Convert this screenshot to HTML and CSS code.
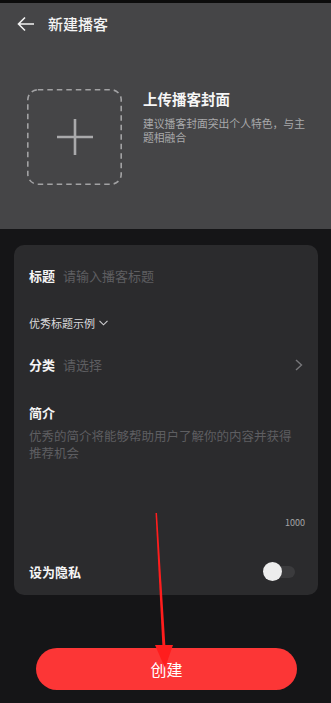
FILE: index.html
```html
<!DOCTYPE html>
<html lang="zh">
<head>
<meta charset="utf-8">
<link rel="stylesheet" href="styles.css">
</head>
<body>
<div class="page">
  <div class="strip"></div>
  <header class="header">
    <div class="nav">
      <svg class="back" width="18" height="16" viewBox="0 0 18 16"><path d="M17 8H2M8 1.5L1.5 8L8 14.5" fill="none" stroke="#f2f2f2" stroke-width="1.6"/></svg>
      <span class="nav-title">新建播客</span>
    </div>
    <div class="cover">
      <div class="upload">
        <svg class="dash" width="95" height="96" viewBox="0 0 95 96"><rect x="0.8" y="0.8" width="93.4" height="94.4" rx="10" fill="none" stroke="#a2a2a4" stroke-width="1.6" stroke-dasharray="5.5 4"/></svg>
        <svg width="36" height="36" viewBox="0 0 36 36"><path d="M18 0V36M0 18H36" stroke="#a9a9ab" stroke-width="2.6"/></svg>
      </div>
      <div class="cover-text">
        <div class="cover-title">上传播客封面</div>
        <div class="cover-sub">建议播客封面突出个人特色，与主题相融合</div>
      </div>
    </div>
  </header>

  <section class="card">
    <div class="row r-title"><span class="label">标题</span><span class="ph">请输入播客标题</span></div>
    <div class="row r-example"><span class="example">优秀标题示例</span>
      <svg width="9" height="6" viewBox="0 0 9 6"><path d="M0.5 0.8L4.5 4.8L8.5 0.8" fill="none" stroke="#cfcfd1" stroke-width="1.1"/></svg></div>
    <div class="row r-cat"><span class="label">分类</span><span class="ph">请选择</span>
      <svg class="chev" width="8" height="12" viewBox="0 0 8 12"><path d="M1 1L6.5 6L1 11" fill="none" stroke="#77777a" stroke-width="1.4"/></svg></div>
    <div class="row r-intro"><span class="label">简介</span></div>
    <div class="desc">优秀的简介将能够帮助用户了解你的内容并获得推荐机会</div>
    <div class="count">1000</div>
    <div class="row r-private"><span class="label">设为隐私</span>
      <span class="toggle"><span class="knob"></span></span></div>
  </section>

  <div class="btn">创建</div>

  <svg class="arrow" width="331" height="703" viewBox="0 0 331 703">
    <polygon points="155.5,513 157,513 165.5,648 162.5,648" fill="#ff1d1d"/>
    <polygon points="155,645 173,645 165,668" fill="#ff1d1d"/>
  </svg>
</div>
</body>
</html>
```

FILE: styles.css
```css
* { box-sizing: border-box; }
html, body { margin: 0; padding: 0; }
body {
  background: #151517;
  font-family: "Noto Sans CJK SC", "Noto Sans", sans-serif;
  color: #fff;
}
.page { position: relative; width: 331px; height: 703px; overflow: hidden; }
.strip { height: 3px; background: #0c0c0c; }
.header { background: #454547; height: 226px; }
.nav {
  height: 42px;
  display: flex;
  align-items: center;
  padding-left: 17px;
}
.back { display: block; }
.nav-title {
  margin-left: 13px;
  font-size: 15px;
  font-weight: 500;
  color: #f4f4f4;
  line-height: 20px;
}
.cover {
  display: flex;
  padding: 44px 0 0 27px;
}
.upload {
  position: relative;
  width: 95px;
  height: 96px;
  display: flex;
  align-items: center;
  justify-content: center;
}
.dash { position: absolute; left: 0; top: 0; }
.cover-text { margin-left: 21px; padding-top: 0; }
.cover-title {
  font-size: 14.5px;
  font-weight: 700;
  line-height: 20px;
  color: #f6f6f6;
}
.cover-sub {
  margin-top: 7px;
  width: 170px;
  font-size: 10.8px;
  line-height: 14px;
  color: #a9a9ab;
}
.card {
  margin: 16px 13px 0 14px;
  background: #2b2b2d;
  border-radius: 10px;
  padding: 22px 13px 13px 15px;
}
.row { display: flex; align-items: center; height: 18px; }
.label { font-size: 13px; font-weight: 700; color: #f5f5f5; line-height: 18px; }
.ph { margin-left: 8px; font-size: 13px; color: #5e5e61; line-height: 18px; }
.r-example { margin-top: 29px; }
.example { font-size: 11px; color: #dcdcde; margin-right: 4px; line-height: 18px; }
.r-cat { margin-top: 24px; }
.chev { margin-left: auto; margin-right: 2px; }
.r-intro { margin-top: 30px; }
.desc {
  margin-top: 5px;
  width: 272px;
  font-size: 12.5px;
  line-height: 17px;
  color: #5e5e61;
}
.count {
  margin-top: 56px;
  text-align: right;
  font-size: 9px;
  line-height: 12px;
  color: #a5a5a7;
}
.r-private { margin-top: 33px; height: 20px; }
.toggle {
  margin-left: auto;
  margin-right: 10px;
  position: relative;
  width: 31px;
  height: 12px;
  border-radius: 6px;
  background: #3b3b3d;
}
.knob {
  position: absolute;
  left: -1px;
  top: -4px;
  width: 19px;
  height: 19px;
  border-radius: 50%;
  background: #ededed;
}
.btn {
  margin: 53px 0 0 36px;
  width: 261px;
  height: 42px;
  border-radius: 21px;
  background: #fc3636;
  display: flex;
  align-items: center;
  justify-content: center;
  font-size: 16px;
  color: #fff;
}
.arrow { position: absolute; left: 0; top: 0; pointer-events: none; }
```
